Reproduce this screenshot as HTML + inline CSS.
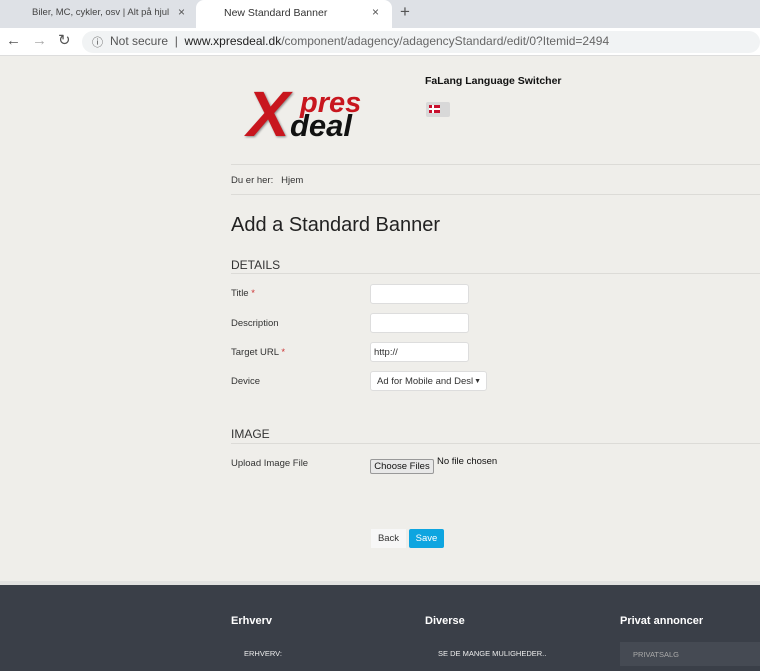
<!DOCTYPE html>
<html><head><meta charset="utf-8"><style>
*{margin:0;padding:0;box-sizing:border-box}
body{width:760px;height:671px;overflow:hidden;background:#efeeea;font-family:"Liberation Sans",sans-serif;position:relative;color:#333}
.a{position:absolute}
.tabs{left:0;top:0;width:760px;height:28px;background:#dee1e6}
.tab2{left:196px;top:0;width:196px;height:28px;background:#fff;border-radius:8px 8px 0 0}
.addr{left:0;top:28px;width:760px;height:28px;background:#fff;border-bottom:1px solid #ddd}
.omni{left:82px;top:31px;width:678px;height:22px;background:#f1f3f4;border-radius:11px}
.t{font-size:12px;white-space:nowrap}
.inp{background:#fff;border:1px solid #ddd;border-radius:3px;width:99px;height:20px}
.lbl{font-size:9.5px;color:#333}
.hr{height:1px;background:#dcdbd7}
.foot{left:0;top:585px;width:760px;height:86px;background:#3a3f48}
.fh{color:#fff;font-weight:bold;font-size:11px}
.fl{color:#eee;font-size:7.5px}
</style></head><body>
<div class="a tabs"></div>
<div class="a tab2"></div>
<div class="a t" style="left:32px;top:7px;font-size:9.5px;color:#444;width:138px;overflow:hidden">Biler, MC, cykler, osv | Alt på hjul</div>
<div class="a t" style="left:178px;top:5px;font-size:12px;color:#555">×</div>
<div class="a t" style="left:224px;top:7px;font-size:10.5px;color:#333">New Standard Banner</div>
<div class="a t" style="left:372px;top:5px;font-size:12px;color:#555">×</div>
<div class="a t" style="left:400px;top:2px;font-size:17px;color:#555">+</div>
<div class="a addr"></div>
<div class="a omni"></div>
<div class="a t" style="left:6px;top:32px;font-size:15px;color:#555">←</div>
<div class="a t" style="left:32px;top:32px;font-size:15px;color:#aaa">→</div>
<div class="a t" style="left:58px;top:31px;font-size:15px;color:#555">↻</div>
<div class="a t" style="left:92px;top:34px;font-size:11px;color:#555">ⓘ</div>
<div class="a t" style="left:110px;top:34px;font-size:12px;color:#555">Not secure &nbsp;|&nbsp; <span style="color:#222">www.xpresdeal.dk</span><span style="color:#666">/component/adagency/adagencyStandard/edit/0?Itemid=2494</span></div>

<div class="a" style="left:247px;top:82px;font:italic bold 64px 'Liberation Sans';color:#c8161e;text-shadow:1px 1px 2px #888;line-height:64px">X</div>
<div class="a" style="left:300px;top:88px;font:italic bold 29px 'Liberation Sans';color:#c8161e;line-height:30px">pres</div>
<div class="a" style="left:290px;top:110px;font:italic bold 31px 'Liberation Sans';color:#111;line-height:32px">deal</div>
<div class="a t" style="left:425px;top:75px;font-size:10.5px;font-weight:bold;color:#111">FaLang Language Switcher</div>
<div class="a" style="left:426px;top:102px;width:24px;height:15px;background:#d8d8d8;border-radius:2px"></div>
<div class="a" style="left:429px;top:105px;width:11px;height:8px;background:#c8102e"></div>
<div class="a" style="left:429px;top:108px;width:11px;height:2px;background:#fff"></div>
<div class="a" style="left:432px;top:105px;width:2px;height:8px;background:#fff"></div>
<div class="a hr" style="left:231px;top:164px;width:529px"></div>
<div class="a lbl" style="left:231px;top:175px">Du er her: &nbsp; Hjem</div>
<div class="a hr" style="left:231px;top:194px;width:529px"></div>
<div class="a t" style="left:231px;top:214px;font-size:20px;color:#222">Add a Standard Banner</div>
<div class="a t" style="left:231px;top:258px;font-size:12px;color:#333">DETAILS</div>
<div class="a hr" style="left:231px;top:273px;width:529px"></div>
<div class="a lbl" style="left:231px;top:288px">Title <span style="color:#c33">*</span></div>
<div class="a inp" style="left:370px;top:284px"></div>
<div class="a lbl" style="left:231px;top:318px">Description</div>
<div class="a inp" style="left:370px;top:313px"></div>
<div class="a lbl" style="left:231px;top:347px">Target URL <span style="color:#c33">*</span></div>
<div class="a inp lbl" style="left:370px;top:342px;padding:4px 3px">http://</div>
<div class="a lbl" style="left:231px;top:376px">Device</div>
<div class="a inp lbl" style="left:370px;top:371px;width:117px;padding:4px 6px">Ad for Mobile and Desl<span style="position:absolute;right:5px;font-size:7px;top:6px">▼</span></div>
<div class="a t" style="left:231px;top:427px;font-size:12px;color:#333">IMAGE</div>
<div class="a hr" style="left:231px;top:443px;width:529px"></div>
<div class="a lbl" style="left:231px;top:458px">Upload Image File</div>
<div class="a lbl" style="left:370px;top:459px;width:64px;height:15px;background:#e8e8e8;border:1px solid #999;border-radius:2px;text-align:center;padding-top:1px;color:#111">Choose Files</div>
<div class="a lbl" style="left:437px;top:456px;color:#111">No file chosen</div>
<div class="a lbl" style="left:371px;top:529px;width:35px;height:19px;background:#f7f7f7;text-align:center;padding-top:4px;color:#333">Back</div>
<div class="a lbl" style="left:409px;top:529px;width:35px;height:19px;background:#0ea5e0;border-radius:2px;text-align:center;padding-top:4px;color:#fff">Save</div>
<div class="a" style="left:0;top:581px;width:760px;height:4px;background:#e2e2e0"></div>
<div class="a foot"></div>
<div class="a fh" style="left:231px;top:615px">Erhverv</div>
<div class="a fh" style="left:425px;top:615px">Diverse</div>
<div class="a fh" style="left:620px;top:615px">Privat annoncer</div>
<div class="a fl" style="left:244px;top:649px">ERHVERV:</div>
<div class="a fl" style="left:438px;top:649px">SE DE MANGE MULIGHEDER..</div>
<div class="a" style="left:620px;top:642px;width:140px;height:24px;background:#454a53"></div>
<div class="a fl" style="left:633px;top:650px;color:#aaa">PRIVATSALG</div>
</body></html>
